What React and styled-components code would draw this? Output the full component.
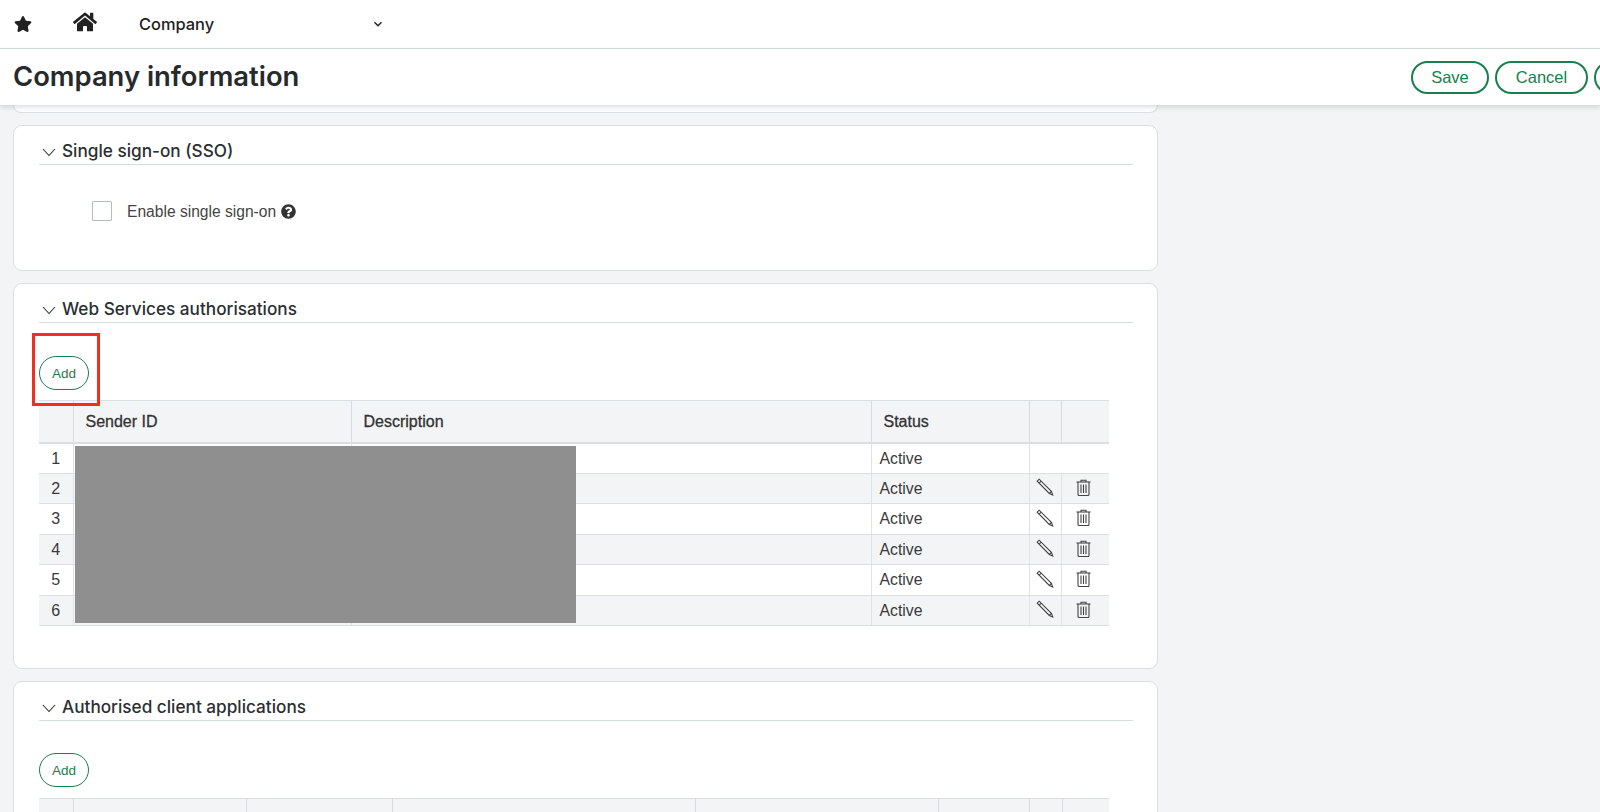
import React from 'react';
import styled, { createGlobalStyle } from 'styled-components';
import { FaStar, FaHome, FaQuestionCircle } from 'react-icons/fa';

const GlobalStyle = createGlobalStyle`
    html, body {
        margin: 0;
        height: 100%;
    }
    body {
        background: #f2f4f6;
        font-family: "Liberation Sans", Arial, sans-serif;
        color: #333;
        overflow: hidden;
    }
`;

const Page = styled.div`
    height: 812px;
    display: flex;
    flex-direction: column;
    overflow: hidden;
`;

const TopBar = styled.div`
    height: 48px;
    flex: none;
    display: flex;
    align-items: center;
    background: #fff;
    border-bottom: 1px solid #d5dde2;
    color: #222;
`;

const StarSlot = styled.div`
    width: 73px;
    padding-left: 14px;
    box-sizing: border-box;
    display: flex;
    font-size: 18px;
`;

const HomeSlot = styled.div`
    width: 66px;
    display: flex;
    font-size: 24px;
    margin-top: -4px;
`;

const CompanySelect = styled.div`
    width: 244px;
    display: flex;
    align-items: center;
    justify-content: space-between;
    font-family: Inter, sans-serif;
    font-size: 16.4px;
    font-weight: 500;
`;

const TitleBar = styled.div`
    height: 56px;
    flex: none;
    display: flex;
    align-items: center;
    justify-content: space-between;
    padding: 0 0 2px 13px;
    box-sizing: border-box;
    background: #fff;
    box-shadow: 0 2px 5px rgba(60, 80, 90, 0.2);
    position: relative;
    z-index: 1;
`;

const PageTitle = styled.h1`
    margin: 0;
    font-family: Inter, sans-serif;
    font-size: 27.4px;
    font-weight: 600;
    color: #262a2d;
`;

const TitleActions = styled.div`
    display: flex;
    gap: 6px;
    margin: 2px -60px 0 0;
`;

const PillButton = styled.button`
    box-sizing: border-box;
    width: ${(p) => p.$width}px;
    height: 33px;
    padding: 0;
    border: 2px solid #17804c;
    border-radius: 17px;
    background: #fff;
    color: #17804c;
    font-family: "Liberation Sans", Arial, sans-serif;
    font-size: 16.5px;
`;

const Content = styled.div`
    flex: 1;
    min-height: 0;
    width: 1145px;
    margin-left: 13px;
    display: flex;
    flex-direction: column;
    gap: 12px;
`;

const PeekCard = styled.div`
    height: 7px;
    flex: none;
    background: #fff;
    border: 1px solid #d9dfe3;
    border-top: 0;
    border-radius: 0 0 8px 8px;
`;

const Card = styled.section`
    box-sizing: border-box;
    height: ${(p) => p.$height}px;
    flex: none;
    background: #fff;
    border: 1px solid #d9dfe3;
    border-radius: 9px;
    padding: 0 24px 0 25px;
`;

const SectionHeader = styled.div`
    height: 39px;
    display: flex;
    align-items: center;
    gap: 6px;
    padding: 10px 0 0 3px;
    border-bottom: 1px solid #d5dde2;
    box-sizing: border-box;
    font-family: Inter, sans-serif;
    font-size: 17.2px;
    font-weight: 500;
    color: #2b2f32;

    svg {
        margin-top: 3px;
    }
`;

const CheckRow = styled.div`
    display: flex;
    align-items: center;
    padding: 36px 0 0 53px;
    font-size: 15.6px;
    color: #444;
`;

const CheckBox = styled.span`
    box-sizing: border-box;
    width: 20px;
    height: 20px;
    border: 1px solid #b5bcc1;
    border-radius: 1px;
    margin-right: 15px;
`;

const CheckLabel = styled.span`
    padding-top: 2px;
`;

const HelpIcon = styled.span`
    display: flex;
    margin-left: 5px;
    font-size: 15px;
    color: #333;
`;

const ToolRow = styled.div`
    display: flex;
    padding-top: ${(p) => p.$top}px;
    margin-bottom: ${(p) => p.$bottom}px;
`;

const AddWrap = styled.div`
    position: relative;
    display: flex;
`;

const Highlight = styled.div`
    position: absolute;
    left: -7px;
    top: -23px;
    z-index: 1;
    width: 68px;
    height: 73px;
    box-sizing: border-box;
    border: 3px solid #f0301f;
`;

const AddButton = styled.button`
    box-sizing: border-box;
    width: 50px;
    height: 34px;
    padding: 0;
    border: 1px solid #17804c;
    border-radius: 17px;
    background: #fff;
    color: #17804c;
    font-family: "Liberation Sans", Arial, sans-serif;
    font-size: 13.5px;
`;

const TableWrap = styled.div`
    position: relative;
    width: 1070px;
`;

const Table = styled.table`
    width: 100%;
    border-collapse: collapse;
    table-layout: fixed;
    border-top: 1px solid #d9dfe3;
`;

const HeadCell = styled.th`
    height: 42px;
    padding: 2px 12px 0;
    box-sizing: border-box;
    background: #f2f4f6;
    border-left: 1px solid #d5dde2;
    border-bottom: 2px solid #d9dfe3;
    text-align: left;
    font-size: 16px;
    font-weight: 400;
    color: #333;
    -webkit-text-stroke: 0.3px #333;
    &:first-child {
        border-left: 0;
    }
`;

const Row = styled.tr`
    background: ${(p) => (p.$shaded ? '#f2f4f6' : '#fff')};
`;

const Cell = styled.td`
    height: 30.5px;
    padding: 1px 8px 0;
    box-sizing: border-box;
    border-left: 1px solid #dde3e7;
    border-bottom: 1px solid #d9dfe3;
    font-size: 15.8px;
    color: #3a3a3a;
`;

const IndexCell = styled(Cell)`
    border-left: 0;
    text-align: center;
    font-size: 16px;
    padding: 1px 0 0;
`;

const IconCell = styled(Cell)`
    padding: 0;
    border-left: ${(p) => (p.$open ? '0' : '1px solid #dde3e7')};
`;

const Redaction = styled.div`
    position: absolute;
    left: 36px;
    top: 46px;
    width: 501px;
    height: 177px;
    background: #8f8f8f;
`;

const PencilSvg = styled.svg`
    display: block;
    margin: -1px auto 1px;
`;

const TrashSvg = styled.svg`
    display: block;
    margin: -1px 0 1px 14px;
`;

const Chevron = () => (
    <svg width="14" height="14" viewBox="0 0 14 14" fill="none" stroke="#333" strokeWidth="1.1">
        <path d="M1 4l6 6.5L13 4" />
    </svg>
);

const SmallChevron = () => (
    <svg width="10" height="10" viewBox="0 0 10 10" fill="none" stroke="#222" strokeWidth="1.4">
        <path d="M1.5 3.2L5 6.8l3.5-3.6" />
    </svg>
);

const Pencil = () => (
    <PencilSvg width="18" height="18" viewBox="0 0 18 18" fill="none" stroke="#444" strokeWidth="1.1">
        <path d="M1.2 3.2l2-2L15.4 13.4l1.3 3.5-3.4-1.4z" />
        <path d="M3.2 5.2l2-2" />
        <path d="M13.3 15.5l2.1-2.1" />
    </PencilSvg>
);

const Trash = () => (
    <TrashSvg width="15" height="17" viewBox="0 0 15 17" fill="none" stroke="#444" strokeWidth="1.1">
        <path d="M0.5 3h14" />
        <path d="M5 3V1.2h5V3" />
        <path d="M2 3v12.2c0 .8.5 1.3 1.2 1.3h8.6c.7 0 1.2-.5 1.2-1.3V3" />
        <path d="M5 5.5v8.5M7.5 5.5v8.5M10 5.5v8.5" />
    </TrashSvg>
);

const senderRows = [1, 2, 3, 4, 5, 6];
const clientColumns = [34, 173, 146, 303, 243, 91, 33, 47];

const SenderTable = () => (
    <TableWrap>
        <Table>
            <colgroup>
                <col style={{ width: 34 }} />
                <col style={{ width: 278 }} />
                <col style={{ width: 520 }} />
                <col style={{ width: 158 }} />
                <col style={{ width: 32 }} />
                <col style={{ width: 48 }} />
            </colgroup>
            <thead>
                <tr>
                    <HeadCell />
                    <HeadCell>Sender ID</HeadCell>
                    <HeadCell>Description</HeadCell>
                    <HeadCell>Status</HeadCell>
                    <HeadCell />
                    <HeadCell />
                </tr>
            </thead>
            <tbody>
                {senderRows.map((n) => (
                    <Row key={n} $shaded={n % 2 === 0}>
                        <IndexCell>{n}</IndexCell>
                        <Cell />
                        <Cell />
                        <Cell>Active</Cell>
                        <IconCell>{n > 1 && <Pencil />}</IconCell>
                        <IconCell $open={n === 1}>{n > 1 && <Trash />}</IconCell>
                    </Row>
                ))}
            </tbody>
        </Table>
        <Redaction />
    </TableWrap>
);

const ClientTable = () => (
    <TableWrap>
        <Table>
            <colgroup>
                {clientColumns.map((w, i) => (
                    <col key={i} style={{ width: w }} />
                ))}
            </colgroup>
            <thead>
                <tr>
                    {clientColumns.map((w, i) => (
                        <HeadCell key={i} />
                    ))}
                </tr>
            </thead>
        </Table>
    </TableWrap>
);

const SectionTitle = ({ children }) => (
    <SectionHeader>
        <Chevron />
        {children}
    </SectionHeader>
);

export default function App() {
    return (
        <Page>
            <GlobalStyle />
            <TopBar>
                <StarSlot><FaStar /></StarSlot>
                <HomeSlot><FaHome /></HomeSlot>
                <CompanySelect>
                    Company
                    <SmallChevron />
                </CompanySelect>
            </TopBar>
            <TitleBar>
                <PageTitle>Company information</PageTitle>
                <TitleActions>
                    <PillButton $width={78}>Save</PillButton>
                    <PillButton $width={93}>Cancel</PillButton>
                    <PillButton $width={66} />
                </TitleActions>
            </TitleBar>
            <Content>
                <PeekCard />
                <Card $height={146}>
                    <SectionTitle>Single sign-on (SSO)</SectionTitle>
                    <CheckRow>
                        <CheckBox />
                        <CheckLabel>Enable single sign-on</CheckLabel>
                        <HelpIcon><FaQuestionCircle /></HelpIcon>
                    </CheckRow>
                </Card>
                <Card $height={386}>
                    <SectionTitle>Web Services authorisations</SectionTitle>
                    <ToolRow $top={33} $bottom={10}>
                        <AddWrap>
                            <Highlight />
                            <AddButton>Add</AddButton>
                        </AddWrap>
                    </ToolRow>
                    <SenderTable />
                </Card>
                <Card $height={200}>
                    <SectionTitle>Authorised client applications</SectionTitle>
                    <ToolRow $top={32} $bottom={11}>
                        <AddWrap>
                            <AddButton>Add</AddButton>
                        </AddWrap>
                    </ToolRow>
                    <ClientTable />
                </Card>
            </Content>
        </Page>
    );
}
